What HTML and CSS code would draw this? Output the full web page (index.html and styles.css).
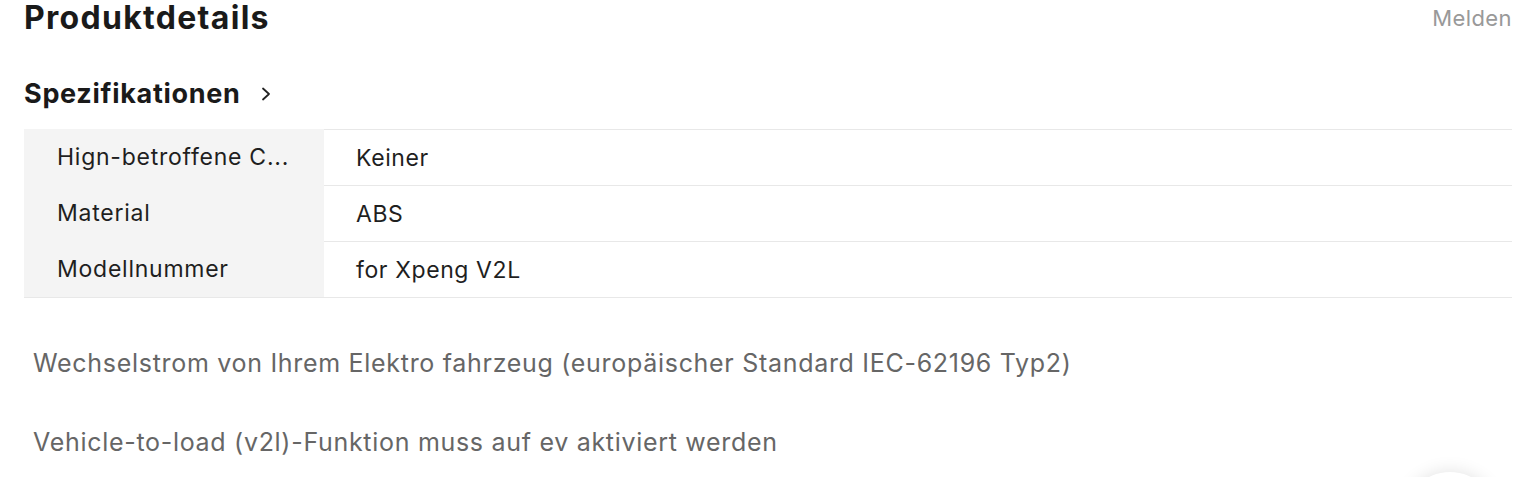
FILE: index.html
```html
<!DOCTYPE html>
<html lang="de">
<head>
<meta charset="utf-8">
<link rel="stylesheet" href="styles.css">
</head>
<body>
<div class="page">
  <div class="head">
    <h2 class="title">Produktdetails</h2>
    <a class="report">Melden</a>
  </div>
  <h3 class="spec">Spezifikationen
    <svg class="chev" width="14" height="14" viewBox="0 0 14 14"><path d="M4 1.5 L10 7 L4 12.5" fill="none" stroke="#222" stroke-width="1.8" stroke-linecap="round" stroke-linejoin="round"/></svg>
  </h3>
  <div class="table">
    <div class="row"><div class="k">Hign-betroffene C...</div><div class="v">Keiner</div></div>
    <div class="row"><div class="k">Material</div><div class="v">ABS</div></div>
    <div class="row"><div class="k">Modellnummer</div><div class="v">for Xpeng V2L</div></div>
  </div>
  <div class="desc">
    <p>Wechselstrom von Ihrem Elektro fahrzeug (europäischer Standard IEC-62196 Typ2)</p>
    <p>Vehicle-to-load (v2l)-Funktion muss auf ev aktiviert werden</p>
  </div>
</div>
<div class="fab"></div>
</body>
</html>
```
FILE: styles.css
```css
html, body { margin: 0; padding: 0; background: #fff; overflow: hidden; }
body { font-family: Inter, "Noto Sans", sans-serif; color: #1f1f1f; }
.page { padding: 0 24px; }
.head { display: flex; justify-content: space-between; align-items: flex-start; height: 62px; }
.title { margin: 0; font-size: 32px; font-weight: 700; line-height: 36px; letter-spacing: 1.3px; color: #1a1a1a; }
.report { font-size: 22px; color: #999; line-height: 36px; letter-spacing: 0.4px; }
.spec { margin: 0; font-size: 27px; font-weight: 700; line-height: 30px; letter-spacing: 0.7px; display: flex; align-items: center; gap: 18px; color: #1a1a1a; height: 67px; padding-bottom: 4px; box-sizing: border-box; }
.table { border-bottom: 1px solid #e8e8e8; }
.row { display: flex; height: 56px; }
.k { width: 300px; background: #f4f4f4; padding-left: 33px; box-sizing: border-box; display: flex; align-items: center; font-size: 23px; letter-spacing: 0.75px; color: #1f1f1f; }
.v { flex: 1; border-top: 1px solid #e8e8e8; padding-left: 32px; display: flex; align-items: center; font-size: 23px; letter-spacing: 0.6px; color: #1f1f1f; }
.desc { padding: 47px 9px 0; }
.desc p { margin: 0 0 43px; font-size: 25px; line-height: 36px; letter-spacing: 0.7px; color: #666; }
.fab { position: absolute; left: 1402px; top: 472px; width: 96px; height: 96px; border-radius: 50%; background: #fff; box-shadow: 0 0 18px rgba(0,0,0,0.12); }
```
